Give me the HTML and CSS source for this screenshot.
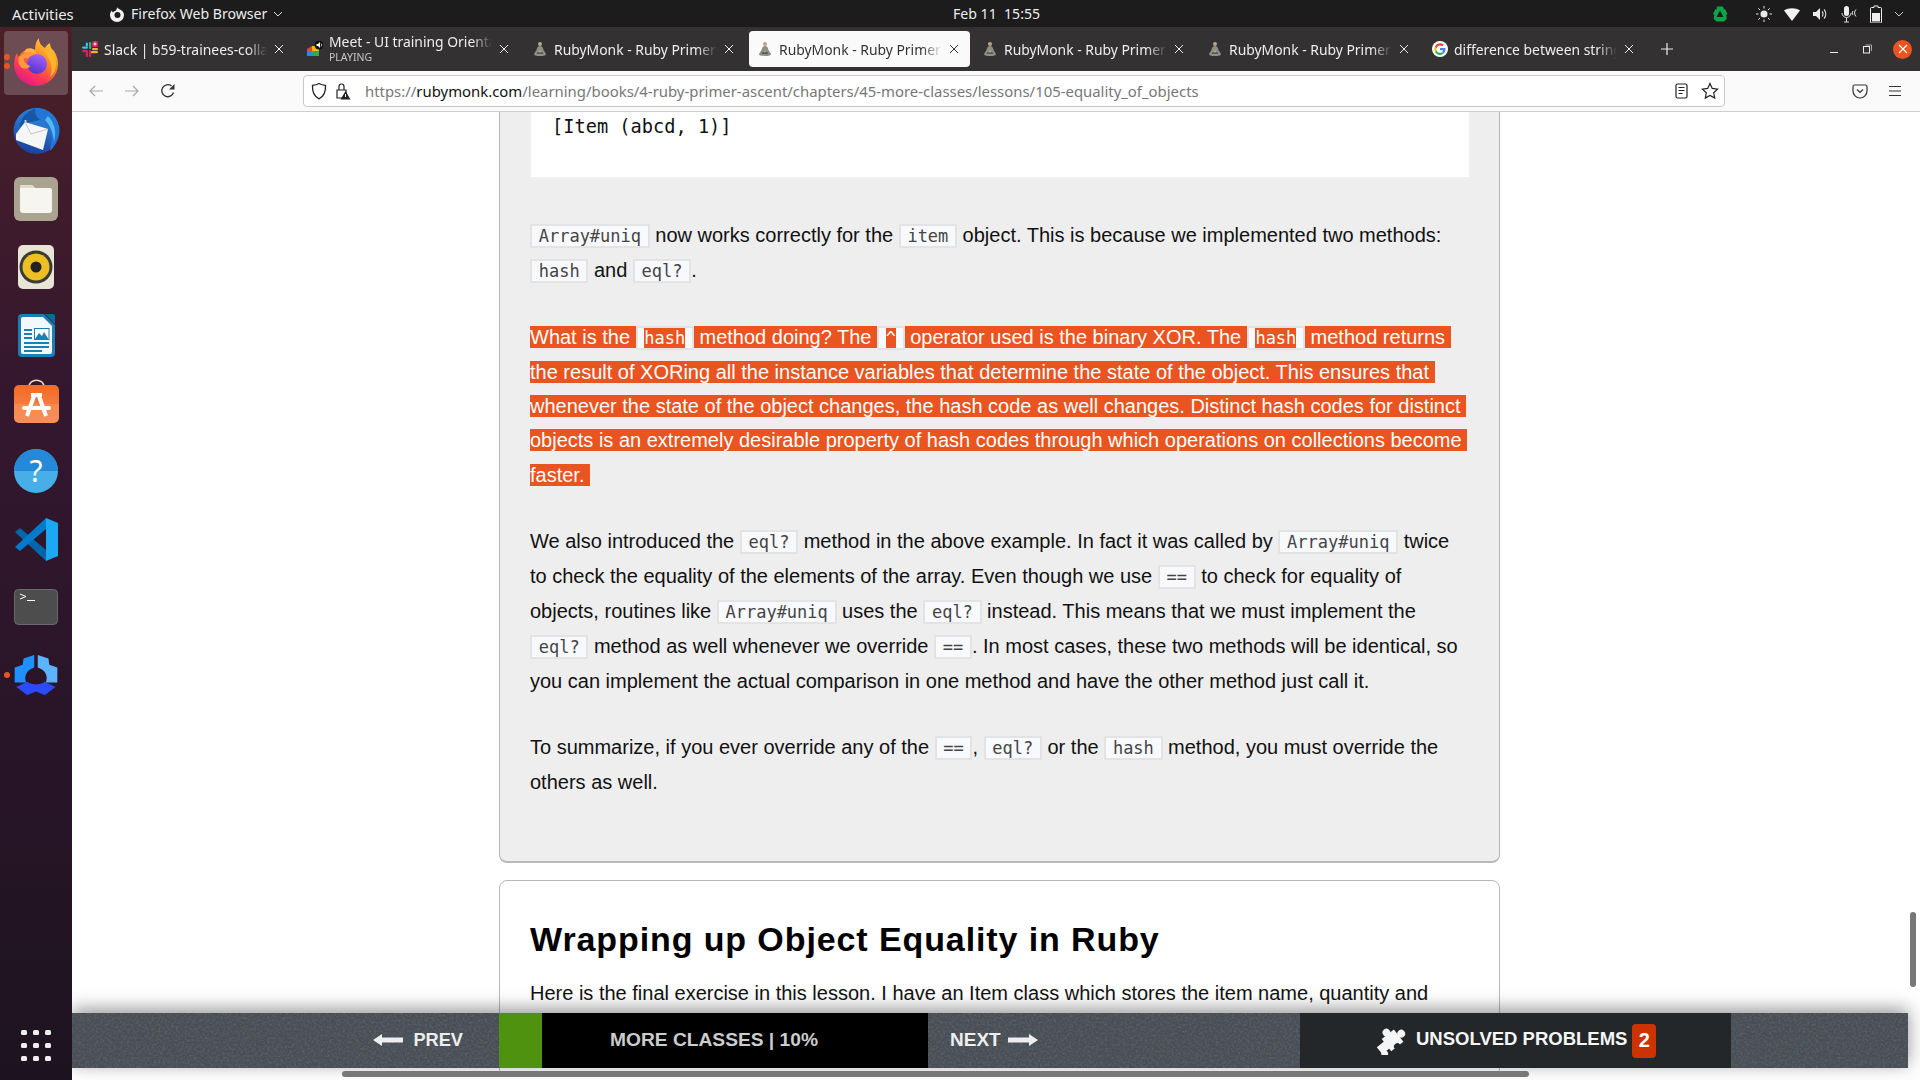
FILE: index.html
```html
<!DOCTYPE html>
<html lang="en">
<head>
<meta charset="utf-8">
<title>RubyMonk - Ruby Primer</title>
<link rel="stylesheet" href="styles.css">
</head>
<body>
<svg class="defs" width="0" height="0" aria-hidden="true">
  <defs>
    <symbol id="monk" viewBox="0 0 16 16">
      <circle cx="8" cy="3" r="2" fill="#b9a58c"/>
      <path d="M8 5c-2 0-3 1.500-3.500 4L2 13c0 1.500 2 2 6 2s6-.5 6-2l-2.500-4C11 6.500 10 5 8 5z" fill="#8f8f85"/>
      <path d="M5.500 11h5l1 2h-7z" fill="#5c5c54"/>
      <circle cx="8" cy="10.500" r="1" fill="#c9a36f"/>
    </symbol>
    <symbol id="close" viewBox="0 0 12 12">
      <path d="M2 2l8 8M10 2l-8 8" fill="none" stroke="currentColor" stroke-width="1"/>
    </symbol>
    <linearGradient id="ffbody" x1="0.85" y1="0.05" x2="0.3" y2="1">
      <stop offset="0" stop-color="#ffd23f"/>
      <stop offset=".4" stop-color="#ff8a1e"/>
      <stop offset=".72" stop-color="#ff3a55"/>
      <stop offset="1" stop-color="#e0178c"/>
    </linearGradient>
    <linearGradient id="ffcore" x1="0.7" y1="0" x2="0.3" y2="1">
      <stop offset="0" stop-color="#a661ff"/>
      <stop offset="1" stop-color="#5234c9"/>
    </linearGradient>
    <linearGradient id="tb" x1="0.7" y1="0" x2="0.4" y2="1">
      <stop offset="0" stop-color="#2f96e6"/>
      <stop offset="1" stop-color="#1c3f9e"/>
    </linearGradient>
    <linearGradient id="shop" x1="0" y1="0" x2="0" y2="1">
      <stop offset="0" stop-color="#f36a26"/>
      <stop offset=".5" stop-color="#f47c3c"/>
      <stop offset=".5" stop-color="#f58a50"/>
      <stop offset="1" stop-color="#f78f58"/>
    </linearGradient>
    <filter id="grain" x="0" y="0" width="100%" height="100%">
      <feTurbulence type="fractalNoise" baseFrequency="0.45" numOctaves="3" seed="7"/>
      <feColorMatrix type="matrix" values="0 0 0 0 0.18  0 0 0 0 0.2  0 0 0 0 0.22  0.9 0 0 0 -0.36"/>
    </filter>
  </defs>
</svg>
<div class="screen">
  <header class="topbar">
    <span class="activities">Activities</span>
    <span class="appmenu">
      <svg class="ti" width="16" height="16" viewBox="0 0 16 16"><path d="M8 1c.5 1.500 2 1.500 3 2.500 2.500 1 4 3 4 5.500a7 7 0 0 1-14 0c0-2 .8-3.500 2-4.500 0 1 .5 1.500 1 2 .5-1 2-1.500 3-2 .5-1 1-2 1-3.500z" fill="#f2f2f2"/><circle cx="8.500" cy="9" r="3" fill="#1c1c1c"/></svg>
      Firefox Web Browser
      <svg width="10" height="6" viewBox="0 0 10 6"><path d="M1 1l4 4 4-4" fill="none" stroke="#ddd" stroke-width="1"/></svg>
    </span>
    <span class="clock">Feb 11&nbsp; 15:55</span>
    <span class="tray">
      <svg width="18" height="18" viewBox="0 0 18 18"><path d="M6 1.500h6l1 3 1-.5 2.500 5-1.500 1 1 3.500-3 3H5.500l-3-3 1-3.500L2 9l2.500-5 1 .5z" fill="#0fa34a"/><path d="M9 5.500l3.500 6.500h-7z" fill="#1c1c1c"/></svg>
      <svg class="t-sun" width="16" height="16" viewBox="0 0 16 16"><circle cx="8" cy="8" r="3.500" fill="#e8e8e8"/><path d="M8 0v2.500M8 13.500V16M0 8h2.500M13.500 8H16M2.300 2.300l1.800 1.800M11.900 11.900l1.800 1.800M13.700 2.300l-1.800 1.800M4.100 11.900l-1.800 1.800" stroke="#e8e8e8" stroke-width="1"/></svg>
      <svg width="16" height="14" viewBox="0 0 16 14"><path d="M0 3.500C4 .5 12 .5 16 3.500L8 14z" fill="#f2f2f2"/></svg>
      <svg width="16" height="14" viewBox="0 0 16 14"><path d="M1 5h3l4-4v12l-4-4H1z" fill="#eee"/><path d="M10 4.500a3.500 3.500 0 0 1 0 5M12 2.500a6.500 6.500 0 0 1 0 9" fill="none" stroke="#ddd" stroke-width="1.100"/></svg>
      <svg width="18" height="18" viewBox="0 0 18 18"><rect x="4" y="1" width="5" height="10" rx="2.500" fill="#eee"/><path d="M2 8a4.500 4.500 0 0 0 9 0M6.500 13v4M4 17h5M13 6a3 3 0 0 0 0 4M16 4.500a5 5 0 0 0 0 7" fill="none" stroke="#ddd"/></svg>
      <svg width="12" height="18" viewBox="0 0 12 18"><path d="M4 1h4v1.500h2.500a1 1 0 0 1 1 1V17a1 1 0 0 1-1 1h-9a1 1 0 0 1-1-1V3.500a1 1 0 0 1 1-1H4z" fill="none" stroke="#eee"/><rect x="2" y="8" width="8" height="8.500" fill="#eee"/></svg>
      <svg width="10" height="6" viewBox="0 0 10 6"><path d="M1 1l4 4 4-4" fill="none" stroke="#ccc" stroke-width="1"/></svg>
    </span>
  </header>
  <div class="desktop">
    <nav class="dock">
      <div class="dock-item active">
        <span class="pips"><i></i><i></i></span>
        <svg class="ic-ff" width="48" height="48" viewBox="0 0 48 48">
          <path d="M27 0C26.500 5 30 8 33 10 34 8 35 7 38 5 38 8 39 11 42 13 45 18 46 22 46 26A22 22 0 0 1 2 26C2 22 3 18 5 15 5.500 17 6 18 7 19 8 15 11 13 14 12 17 11 20 11 23 12 23 7 24 3 27 0z" fill="url(#ffbody)"/>
          <path d="M36 8c5 5 8 11 8 18 0 5-2 10-6 13 3-7 2-15-3-21-2-3-1-7 1-10z" fill="#ffb52e"/>
          <circle cx="25" cy="26" r="10" fill="url(#ffcore)"/>
          <path d="M7 19C12 14 20 14 25 16 21 16.500 18 18 16 20L12 20C11 23 14 26 18 28 16 32 10 31 8 28 6 25 6 22 7 19z" fill="#ff9a3c"/>
          <path d="M14 11c3-1 6-1 9 1l1 4c-4-2-8-2-12-1z" fill="#ffb04a"/>
        </svg>
      </div>
      <div class="dock-item">
        <svg width="49" height="48" viewBox="0 0 49 48">
          <circle cx="24.500" cy="24" r="23" fill="url(#tb)"/>
          <path d="M10 8C15 2 24 0 34 3 42 8 46 14 47 22 47 30 44 38 38 44L40 30C38 18 30 12 22 12 16 12 12 13 8 16z" fill="#2376d6"/>
          <path d="M36 9c6 6 9 15 6 26-1-10-4-17-9-22z" fill="#53b7f2"/>
          <path d="M7 20C8 12 14 5 24 1 22 6 24 9 28 13L14 16z" fill="#1657a8"/>
          <circle cx="13.500" cy="14" r="1" fill="#dfeefa"/>
          <path d="M4 27L13 15 36 22 31 43 4 33z" fill="#f6f6f6"/>
          <path d="M13 15l6 12 17-5" fill="none" stroke="#b8b8b8" stroke-width=".8"/>
        </svg>
      </div>
      <div class="dock-item">
        <svg width="44" height="44" viewBox="0 0 44 44">
          <rect width="44" height="44" rx="6" fill="#a9a38f"/>
          <path d="M6 10a2 2 0 0 1 2-2h10l3 3h15a2 2 0 0 1 2 2v20a3 3 0 0 1-3 3H9a3 3 0 0 1-3-3z" fill="#f7f5ef"/>
          <path d="M6 10a2 2 0 0 1 2-2h10l3 3H6z" fill="#dfdbcd"/>
        </svg>
      </div>
      <div class="dock-item">
        <svg width="36" height="44" viewBox="0 0 36 44">
          <rect width="36" height="44" rx="5" fill="#e8e4d6"/>
          <circle cx="18" cy="22" r="16.500" fill="#3a3a36"/>
          <circle cx="18" cy="22" r="13.500" fill="#ecc024"/>
          <circle cx="18" cy="22" r="5.500" fill="#222"/>
        </svg>
      </div>
      <div class="dock-item">
        <svg width="37" height="43" viewBox="0 0 37 43">
          <path d="M4 0H26L37 11V39a4 4 0 0 1-4 4H4a4 4 0 0 1-4-4V4a4 4 0 0 1 4-4z" fill="#1a7fb5"/>
          <path d="M5 3H25l9 9V38a2 2 0 0 1-2 2H5a2 2 0 0 1-2-2V5a2 2 0 0 1 2-2z" fill="#f2f8fb"/>
          <path d="M27 0h8a2 2 0 0 1 2 2v8z" fill="#0f6a9a"/>
          <path d="M6 15h8v2H6zM6 19h8v2H6zM6 23h8v2H6zM6 28h25v2H6zM6 32h25v2H6zM6 36h18v2H6z" fill="#1a7fb5"/>
          <rect x="16.500" y="14.500" width="14.500" height="11" fill="#fff" stroke="#1a7fb5"/>
          <path d="M17 25l4-6 3 3 2-4 4.500 7z" fill="#1a7fb5"/>
        </svg>
      </div>
      <div class="dock-item">
        <svg class="ic-shop" width="45" height="44" viewBox="0 0 45 44">
          <path d="M15 8c0-9 15-9 15 0" fill="none" stroke="#f6d6b8" stroke-width="1.500"/>
          <rect y="6" width="45" height="38" rx="5" fill="url(#shop)"/>
          <path d="M20 17L13 37M25 17L32 37" stroke="#fff" stroke-width="4" fill="none"/>
          <rect x="17" y="14" width="11" height="4" fill="#fff"/>
          <rect x="8" y="27" width="29" height="4" rx="2" fill="#fff"/>
        </svg>
      </div>
      <div class="dock-item">
        <svg width="44" height="44" viewBox="0 0 44 44">
          <circle cx="22" cy="22" r="22" fill="#47aee8"/>
          <path d="M0 22a22 22 0 0 1 44 0z" fill="#2389d8"/>
          <text x="22" y="33" class="help-q">?</text>
        </svg>
      </div>
      <div class="dock-item">
        <svg width="43" height="43" viewBox="0 0 43 43">
          <path d="M31 43V32L5 10 0 14z" fill="#0065a9"/>
          <path d="M31 0V11L5 33 0 29z" fill="#007acc"/>
          <path d="M31 0L43 5V38L31 43z" fill="#1ca8f2"/>
        </svg>
      </div>
      <div class="dock-item">
        <svg width="44" height="36" viewBox="0 0 44 36">
          <rect x="0.500" y="0.500" width="43" height="35" rx="4" fill="#4d4d4d" stroke="#6a6a6a"/>
          <path d="M6 5l6 2.500-6 2.500M13 11.500h8" fill="none" stroke="#fff" stroke-width="1"/>
        </svg>
      </div>
      <div class="dock-item">
        <span class="pips"><i></i></span>
        <svg width="48" height="49" viewBox="0 0 54 48">
          <path d="M25 1l-12 4-1 7-9 3v17h13c-3-7 0-14 9-17z" fill="#1e90ff"/>
          <path d="M29 1l12 4 1 7 9 3v17H38c3-7 0-14-9-17z" fill="#5cb3ff"/>
          <path d="M5 37l12-6c6 4 14 4 20 0l12 6-12 9-10-4-10 4z" fill="#2a4bff"/>
        </svg>
      </div>
      <div class="dock-apps">
        <svg width="30" height="31" viewBox="0 0 30 31" fill="#eee">
          <rect x="0" y="0" width="6" height="5" rx="1.500"/><rect x="12" y="0" width="6" height="5" rx="1.500"/><rect x="24" y="0" width="6" height="5" rx="1.500"/>
          <rect x="0" y="13" width="6" height="5" rx="1.500"/><rect x="12" y="13" width="6" height="5" rx="1.500"/><rect x="24" y="13" width="6" height="5" rx="1.500"/>
          <rect x="0" y="26" width="6" height="5" rx="1.500"/><rect x="12" y="26" width="6" height="5" rx="1.500"/><rect x="24" y="26" width="6" height="5" rx="1.500"/>
        </svg>
      </div>
    </nav>
    <div class="browser">
      <div class="tabbar">
        <div class="tab">
          <svg class="fav" width="16" height="16" viewBox="0 0 16 16">
            <rect x="0" y="5.500" width="6" height="2.200" rx="1.100" fill="#36c5f0"/><rect x="3.800" y="1.500" width="2.200" height="4" rx="1.100" fill="#36c5f0"/>
            <rect x="7" y="1" width="2.200" height="7" rx="1.100" fill="#2eb67d"/>
            <rect x="10" y="0" width="6" height="6" rx="1.500" fill="#e01e5a"/><path d="M13 1.500v3M11.500 3h3" stroke="#fff" stroke-width="1"/>
            <rect x="10" y="7" width="6" height="2.200" rx="1.100" fill="#ecb22e"/><rect x="8" y="10" width="8" height="2.200" rx="1.100" fill="#ecb22e"/>
            <rect x="0" y="9" width="6" height="2.200" rx="1.100" fill="#e01e5a"/><rect x="3.800" y="11" width="2.200" height="5" rx="1.100" fill="#e01e5a"/>
            <rect x="7" y="9" width="2.200" height="7" rx="1.100" fill="#e01e5a"/>
          </svg>
          <span class="tab-title">Slack | b59-trainees-collab</span>
          <svg class="tab-x" width="12" height="12"><use href="#close"/></svg>
        </div>
        <div class="tab">
          <svg class="fav" width="16" height="16" viewBox="0 0 16 16">
            <path d="M0 8l5-3v5H0z" fill="#ea4335"/><rect x="0" y="10" width="5" height="5" fill="#2684fc"/><rect x="5" y="5" width="7" height="5" fill="#fbbc04"/><rect x="5" y="10" width="7" height="5" fill="#34a853"/>
            <circle cx="12" cy="4" r="4.500" fill="#111"/><path d="M9.500 3h1.500l2-2v6l-2-2H9.500z" fill="#fff"/><path d="M14 2.500a2 2 0 0 1 0 3" stroke="#fff" fill="none" stroke-width=".7"/>
          </svg>
          <span class="tab-title two"><span class="tt-main">Meet - UI training Orientation</span><span class="tt-sub">PLAYING</span></span>
          <svg class="tab-x" width="12" height="12"><use href="#close"/></svg>
        </div>
        <div class="tab">
          <svg class="fav" width="16" height="16"><use href="#monk"/></svg>
          <span class="tab-title">RubyMonk - Ruby Primer: Ascent</span>
          <svg class="tab-x" width="12" height="12"><use href="#close"/></svg>
        </div>
        <div class="tab current">
          <svg class="fav" width="16" height="16"><use href="#monk"/></svg>
          <span class="tab-title">RubyMonk - Ruby Primer: Ascent</span>
          <svg class="tab-x" width="12" height="12"><use href="#close"/></svg>
        </div>
        <div class="tab">
          <svg class="fav" width="16" height="16"><use href="#monk"/></svg>
          <span class="tab-title">RubyMonk - Ruby Primer: Ascent</span>
          <svg class="tab-x" width="12" height="12"><use href="#close"/></svg>
        </div>
        <div class="tab">
          <svg class="fav" width="16" height="16"><use href="#monk"/></svg>
          <span class="tab-title">RubyMonk - Ruby Primer: Ascent</span>
          <svg class="tab-x" width="12" height="12"><use href="#close"/></svg>
        </div>
        <div class="tab">
          <svg class="fav" width="16" height="16" viewBox="0 0 16 16">
            <circle cx="8" cy="8" r="8" fill="#fff"/>
            <path d="M13.500 8.200c0-.4 0-.8-.1-1.200H8v2.300h3.100a2.700 2.700 0 0 1-1.100 1.700l1.800 1.400c1-1 1.700-2.400 1.700-4.200z" fill="#4285f4"/>
            <path d="M8 14c1.500 0 2.800-.5 3.800-1.400L10 11.200c-.5.300-1.200.6-2 .6-1.500 0-2.800-1-3.300-2.400L2.900 10.800A6 6 0 0 0 8 14z" fill="#34a853"/>
            <path d="M4.700 9.400a3.600 3.600 0 0 1 0-2.400L2.900 5.500a6 6 0 0 0 0 5.300z" fill="#fbbc05"/>
            <path d="M8 4.400c.9 0 1.600.3 2.200.9l1.600-1.600A5.800 5.800 0 0 0 2.900 5.500L4.700 7C5.200 5.500 6.500 4.400 8 4.400z" fill="#ea4335"/>
          </svg>
          <span class="tab-title">difference between string and symbol</span>
          <svg class="tab-x" width="12" height="12"><use href="#close"/></svg>
        </div>
        <svg class="newtab" width="14" height="14" viewBox="0 0 14 14"><path d="M7 1v12M1 7h12" stroke="#eee" stroke-width="1.200"/></svg>
        <span class="winctl">
          <svg class="win-min" width="10" height="10" viewBox="0 0 10 10"><path d="M1 8.500h8" stroke="#eee" stroke-width="1"/></svg>
          <svg width="10" height="10" viewBox="0 0 10 10"><rect x="1.500" y="2.500" width="6" height="6.500" fill="none" stroke="#eee"/><path d="M3.500 1h6v6" fill="none" stroke="#aaa"/></svg>
          <span class="win-close"><svg width="10" height="10" viewBox="0 0 10 10"><path d="M1 1l8 8M9 1l-8 8" stroke="#fff" stroke-width="1.200"/></svg></span>
        </span>
      </div>
      <div class="navbar">
        <svg class="nav-btn" width="16" height="16" viewBox="0 0 16 16"><path d="M15 8H2M7 3L2 8l5 5" fill="none" stroke="#a8a8a8" stroke-width="1.200"/></svg>
        <svg class="nav-btn" width="16" height="16" viewBox="0 0 16 16"><path d="M1 8h13M9 3l5 5-5 5" fill="none" stroke="#a8a8a8" stroke-width="1.200"/></svg>
        <svg class="nav-btn" width="16" height="16" viewBox="0 0 16 16"><path d="M13.500 9.500A6 6 0 1 1 11.500 3" fill="none" stroke="#333" stroke-width="1.300"/><path d="M14.500 1v5.500H9z" fill="#333"/></svg>
        <div class="urlbar">
          <svg width="16" height="18" viewBox="0 0 16 18"><path d="M8 1.500c2 1.200 4 1.700 6.500 1.800.3 6-1 11-6.500 13.500C2.500 14.300 1.200 9.300 1.500 3.300 4 3.200 6 2.700 8 1.500z" fill="none" stroke="#222" stroke-width="1.300"/></svg>
          <svg width="16" height="18" viewBox="0 0 16 18"><path d="M2 8h9v8H2z" fill="none" stroke="#222" stroke-width="1.200"/><path d="M4 8V4.500a2.500 2.500 0 0 1 5 0V8" fill="none" stroke="#222" stroke-width="1.200"/><path d="M10.500 9l5 8.500h-10z" fill="#222"/><path d="M10.500 12v3" stroke="#fff"/></svg>
          <span class="url"><span class="dim">https://</span>rubymonk.com<span class="dim">/learning/books/4-ruby-primer-ascent/chapters/45-more-classes/lessons/105-equality_of_objects</span></span>
          <svg class="reader" width="14" height="16" viewBox="0 0 14 16"><rect x="1" y="1" width="11" height="14" rx="1.500" fill="none" stroke="#222" stroke-width="1.200"/><path d="M3.500 4.500h6M3.500 7.500h6M3.500 10.500h4" stroke="#222"/></svg>
          <svg class="star" width="18" height="18" viewBox="0 0 18 18"><path d="M9 1.500l2.300 4.900 5.300.7-3.900 3.700 1 5.300L9 13.500l-4.700 2.600 1-5.300L1.400 7.100l5.300-.7z" fill="none" stroke="#222" stroke-width="1.200"/></svg>
        </div>
        <svg class="pocket" width="16" height="16" viewBox="0 0 16 16"><path d="M1 3.500A1.500 1.500 0 0 1 2.500 2h11A1.500 1.500 0 0 1 15 3.500V8a7 7 0 0 1-14 0z" fill="none" stroke="#333" stroke-width="1.200"/><path d="M5 6.500l3 3 3-3" fill="none" stroke="#333" stroke-width="1.200"/></svg>
        <svg class="burger" width="14" height="12" viewBox="0 0 14 12"><path d="M1 1.500h12M1 6h12M1 10.500h12" stroke="#333" stroke-width="1.200"/></svg>
      </div>
      <main class="page">
        <div class="doc">
          <section class="card gray">
            <pre class="output">[Item (abcd, 1)]</pre>
            <p><code>Array#uniq</code> now works correctly for the <code>item</code> object. This is because we implemented two methods: <code>hash</code> and <code>eql?</code>.</p>
            <p><span class="sel">What is the <code><span class="sel">hash</span></code> method doing? The <code><span class="sel">^</span></code> operator used is the binary XOR. The <code><span class="sel">hash</span></code> method returns&nbsp;<br>the result of XORing all the instance variables that determine the state of the object. This ensures that&nbsp;<br>whenever the state of the object changes, the hash code as well changes. Distinct hash codes for distinct&nbsp;<br>objects is an extremely desirable property of hash codes through which operations on collections become&nbsp;<br>faster.&nbsp;</span></p>
            <p>We also introduced the <code>eql?</code> method in the above example. In fact it was called by <code>Array#uniq</code> twice to check the equality of the elements of the array. Even though we use <code>==</code> to check for equality of objects, routines like <code>Array#uniq</code> uses the <code>eql?</code> instead. This means that we must implement the <code>eql?</code> method as well whenever we override <code>==</code>. In most cases, these two methods will be identical, so you can implement the actual comparison in one method and have the other method just call it.</p>
            <p>To summarize, if you ever override any of the <code>==</code>, <code>eql?</code> or the <code>hash</code> method, you must override the others as well.</p>
          </section>
          <section class="card">
            <h2>Wrapping up Object Equality in Ruby</h2>
            <p>Here is the final exercise in this lesson. I have an Item class which stores the item name, quantity and price.</p>
          </section>
        </div>
        <div class="lessonbar">
          <svg class="bar-grain" aria-hidden="true"><rect width="100%" height="100%" filter="url(#grain)"/></svg>
          <a class="seg prev">
            <svg width="30" height="14" viewBox="0 0 30 14"><path d="M0 7l9-6v3.500h21v5H9V13z" fill="#eee"/></svg>
            PREV
          </a>
          <span class="seg progress"></span>
          <span class="seg chapter">MORE CLASSES | 10%</span>
          <a class="seg next">
            NEXT
            <svg width="30" height="14" viewBox="0 0 30 14"><path d="M30 7l-9-6v3.500H0v5h21V13z" fill="#eee"/></svg>
          </a>
          <a class="seg unsolved">
            <svg class="puzzle" width="32" height="28" viewBox="1 2 29 25">
              <g transform="rotate(-38 16 14)">
                <rect x="9" y="7" width="14" height="14" fill="#f5f5f5"/>
                <rect x="1" y="10" width="9" height="8" fill="#f5f5f5"/>
                <circle cx="16" cy="5" r="3.500" fill="#f5f5f5"/>
                <circle cx="26" cy="14" r="3.500" fill="#f5f5f5"/>
                <circle cx="16" cy="21" r="3" fill="#23272a"/>
                <circle cx="3" cy="19" r="3" fill="#f5f5f5"/>
              </g>
            </svg>
            UNSOLVED PROBLEMS
            <span class="badge">2</span>
          </a>
          <span class="seg rest"></span>
        </div>
        <div class="vscroll"></div>
        <div class="hscroll"></div>
      </main>
    </div>
  </div>
</div>
</body>
</html>
```
FILE: styles.css
```css
* { box-sizing: border-box; }
html, body { margin: 0; height: 100%; overflow: hidden; }
body { font-family: "Noto Sans", sans-serif; background: #fff; }
.defs { position: absolute; }
.screen { display: flex; flex-direction: column; width: 1920px; height: 1080px; }

.topbar { height: 27px; background: #1c1c1c; color: #ececec; font-size: 14.100px; display: flex; align-items: center; flex: none; }
.activities { margin-left: 12px; width: 97px; font-size: 14.800px; }
.appmenu { display: flex; align-items: center; gap: 6px; width: 844px; }
.clock { width: 758px; color: #eee; }
.tray { display: flex; align-items: center; gap: 12px; }
.t-sun { margin-left: 15px; }

.desktop { flex: 1; display: flex; min-height: 0; }
.dock { width: 72px; flex: none; display: flex; flex-direction: column; align-items: center; gap: 4px; padding: 4px 0 19px; background: linear-gradient(180deg, #4a2028 0%, #34172f 35%, #1d1320 100%); }
.dock-item { width: 64px; height: 64px; display: flex; align-items: center; justify-content: center; border-radius: 4px; position: relative; flex: none; }
.dock-item.active { background: rgba(255,255,255,.2); }
.ic-ff { margin-top: -2px; }
.ic-shop { margin-top: -5px; }
.pips { position: absolute; left: 0; top: 0; bottom: 0; display: flex; flex-direction: column; justify-content: center; gap: 3px; }
.active .pips { padding-bottom: 3px; }
.pips i { display: block; width: 6px; height: 6px; border-radius: 50%; background: #e95420; }
.help-q { font: 30px "Noto Sans", sans-serif; fill: #fff; text-anchor: middle; }
.dock-apps { margin-top: auto; height: 31px; display: flex; }

.browser { flex: 1; display: flex; flex-direction: column; min-width: 0; }
.tabbar { height: 44px; background: #333132; display: flex; align-items: center; gap: 4px; padding-left: 2px; flex: none; }
.tab { width: 221px; height: 36px; display: flex; align-items: center; padding: 0 10px 0 8px; gap: 6px; color: #eee; border-radius: 4px; flex: none; }
.tab.current { background: #fafafa; color: #333; }
.fav { flex: none; }
.tab-title { flex: 1; min-width: 0; white-space: nowrap; overflow: hidden; font-size: 13.900px; -webkit-mask-image: linear-gradient(90deg, #000 88%, transparent 100%); mask-image: linear-gradient(90deg, #000 88%, transparent 100%); }
.tab-title.two { display: flex; flex-direction: column; line-height: 16px; margin-top: -1px; }
.tt-sub { font-size: 10.500px; line-height: 14px; color: #c8c8c8; }
.tab-x { flex: none; color: #eee; }
.tab.current .tab-x { color: #333; }
.newtab { margin-left: 11px; flex: none; }
.winctl { margin-left: auto; display: flex; align-items: center; gap: 21px; padding-right: 8px; }
.win-min { margin-right: 2px; }
.win-close { width: 19px; height: 19px; border-radius: 50%; background: #e95420; display: flex; align-items: center; justify-content: center; }

.navbar { height: 41px; background: #fafafa; border-bottom: 1px solid #cfcfcf; display: flex; align-items: center; flex: none; padding-left: 16px; }
.nav-btn { margin-right: 20px; flex: none; }
.urlbar { margin-left: 107px; width: 1422px; height: 32px; background: #fff; border: 1px solid #c9c9c9; border-radius: 4px; display: flex; align-items: center; padding-left: 7px; gap: 8px; flex: none; }
.url { font-size: 14.900px; color: #111; white-space: nowrap; margin-left: 6px; flex: 1; }
.dim { color: #777; }
.reader { margin-right: 4px; }
.star { margin-right: 5px; }
.pocket { margin-left: 127px; flex: none; }
.burger { margin-left: 20px; flex: none; }

.page { flex: 1; position: relative; overflow: hidden; background: #fff; min-height: 0; }
.doc { margin: -24px 0 0 427px; width: 1001px; font-family: "Liberation Sans", Arial, sans-serif; font-size: 20px; line-height: 34.400px; color: #111; }
.card { border: 1px solid #b8b8b8; border-radius: 8px; padding: 0 30px; background: #fff; margin-bottom: 17px; }
.card.gray { background: #eee; border-bottom-width: 2px; padding-bottom: 62px; }
.output { margin: 0 0 41px 1px; background: #fff; height: 88px; padding: 20px 21px 0; font: 18.650px/36px "DejaVu Sans Mono", monospace; color: #111; }
.card p { margin: 0 0 31.500px; }
.card.gray p:last-child { margin-bottom: 0; }
code { font-family: "DejaVu Sans Mono", monospace; font-size: 17px; line-height: 34px; color: #444; background: #f8f9fc; border: 2px solid #e3e3e3; padding: 0 6.700px; }
.sel { background: #e95420; color: #fff; }
code .sel { color: #fff; }
h2 { margin: 38px 0 17px; font-size: 34px; line-height: 40px; letter-spacing: .9px; color: #000; }

.lessonbar { position: absolute; left: 0; right: 12px; bottom: 12px; height: 55px; display: grid; grid-template-columns: 427px 43px 386px 372px 431px 1fr; font-family: "Liberation Sans", Arial, sans-serif; font-weight: bold; font-size: 19px; box-shadow: 0 -4px 18px rgba(60,60,60,.55); background-color: #484e55; }
.bar-grain { position: absolute; left: 0; top: 0; width: 100%; height: 100%; }
.seg { display: flex; align-items: center; min-width: 0; position: relative; padding-bottom: 1px; }
.prev { justify-content: flex-end; padding-right: 36px; gap: 10px; color: #eee; font-size: 18.200px; }
.progress { background: #4f920f; }
.chapter { background: #000; color: #ccc; padding-left: 68px; font-size: 19.200px; }
.next { padding-left: 22px; gap: 7px; color: #eee; }
.unsolved { background: #23272a; color: #f6f6f6; padding: 0 0 3px 76px; gap: 8px; font-size: 18.500px; }
.puzzle { margin-top: 3px; }
.badge { background: #cc3300; color: #fff; width: 24px; height: 34px; border-radius: 4px; display: flex; align-items: center; justify-content: center; margin: 3px 0 0 -3px; font-size: 20px; }
.vscroll { position: absolute; right: 4px; top: 800px; width: 6px; height: 75px; background: #777; border-radius: 3px; }
.hscroll { position: absolute; left: 270px; width: 1187px; bottom: 3px; height: 6px; background: #777; border-radius: 3px; }
```
